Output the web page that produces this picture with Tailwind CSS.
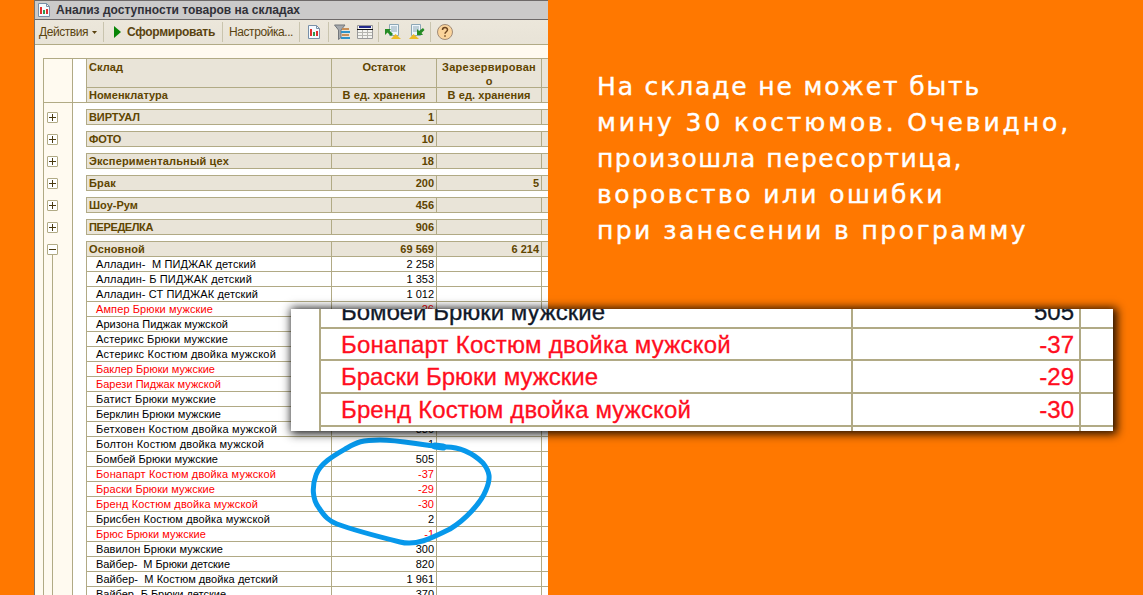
<!DOCTYPE html>
<html lang="ru">
<head>
    <meta charset="UTF-8">
    <meta name="viewport" content="width=device-width, initial-scale=1.0">
    <title>Анализ доступности товаров на складах</title>
    <script src="https://cdn.jsdelivr.net/npm/@tailwindcss/browser@4"></script>
</head>
<body class="relative w-[1143px] h-[595px] overflow-hidden bg-[#ff7800] font-['Liberation_Sans',sans-serif] text-[11px]">
    <div class="flex h-[595px] overflow-hidden">
        <!-- Окно отчёта -->
        <div class="flex flex-col shrink-0 ml-[34px] w-[514px] h-[595px] border-l border-[#77736e] bg-[#fffaf0] overflow-hidden">
            <div class="flex items-center shrink-0 h-5 border-t border-b border-[#6d6969] bg-[#cbcaca] pl-[3px]">
                <svg class="w-3 h-[14px] shrink-0" viewBox="0 0 12 14"><path d="M.5.5h8l3 3v10H.5z" fill="#f5faff" stroke="#7890a8"/><path d="M8.500 .5v3h3" fill="none" stroke="#7890a8"/><path d="M2 4h2v7H2zM8 6h2v5H8z" fill="#e03030"/><path d="M5 7h2v4H5z" fill="#2f9a50"/></svg>
                <span class="fit whitespace-pre ml-1.5 font-bold text-[12px] text-[#303038]" data-w="244">Анализ доступности товаров на складах</span>
            </div>
            <div class="flex items-center shrink-0 h-[25px] border-b border-[#b1aa85] bg-linear-to-b from-[#ece7db] to-[#e8e3d7] pl-1 text-[12px] text-[#5a4310] *:shrink-0">
                <span class="fit whitespace-pre" data-w="49">Действия</span>
                <svg class="ml-1 w-[5px] h-[3px]" viewBox="0 0 5 3"><path d="M0 0h5L2.500 3z" fill="#5a4310"/></svg>
                <i class="ml-[6px] w-px h-5 bg-[#c9c4ae]"></i>
                <svg class="ml-[10px] w-[7px] h-3" viewBox="0 0 7 12"><path d="M0 0l7 6-7 6z" fill="#078507"/></svg>
                <span class="fit whitespace-pre ml-[6px] font-bold" data-w="88">Сформировать</span>
                <i class="ml-[7px] w-px h-5 bg-[#c9c4ae]"></i>
                <span class="fit whitespace-pre ml-[6px]" data-w="64">Настройка...</span>
                <i class="ml-[6px] w-px h-5 bg-[#c9c4ae]"></i>
                <svg class="ml-2 w-3 h-[14px]" viewBox="0 0 12 14"><path d="M.5.500h8l3 3v10H.5z" fill="#f5faff" stroke="#7890a8"/><path d="M8.500 .5v3h3" fill="none" stroke="#7890a8"/><path d="M2 4h2v7H2zM8 6h2v5H8z" fill="#e03030"/><path d="M5 7h2v4H5z" fill="#2f9a50"/></svg>
                <i class="ml-2 w-px h-5 bg-[#c9c4ae]"></i>
                <svg class="ml-[5px] w-4 h-4" viewBox="0 0 16 16"><path d="M.5 1h10.500L7 6v7.500l-2.500 2V6z" fill="#a5a9ad" stroke="#73777b"/><path d="M8 4h7v2H8zM8 10h7v2H8z" fill="#c99058"/><path d="M7 7h9v2H7zM7 13h9v2H7z" fill="#2f93c8"/></svg>
                <svg class="ml-[7px] w-4 h-[14px]" viewBox="0 0 16 14"><path d="M.5.500h15v13H.5z" fill="#f4f4f0" stroke="#999"/><path d="M2 1h12v2H2z" fill="#252b8d"/><path d="M1 7.500h14M1 10.500h14M5.500 5v8M10.500 5v8" stroke="#b5b5b0"/><path d="M0 4.500h16" stroke="#111"/></svg>
                <i class="ml-[5px] w-px h-5 bg-[#c9c4ae]"></i>
                <svg class="ml-[6px] w-4 h-4" viewBox="0 0 16 16"><path d="M4.500.500h9v11h-9z" fill="#eef6fb" stroke="#8ca6b5"/><path d="M6 3h6M6 5h6M6 7h6" stroke="#8ca6b5"/><path d="M0 5h6L4.500 6.500 8 10l-2 2-3.500-3.500L0 11z" fill="#258b25"/><path d="M6 15l4.500-5L16 15z" fill="#edbb25"/></svg>
                <svg class="ml-2 w-4 h-4" viewBox="0 0 16 16"><path d="M2.500.500h9v11h-9z" fill="#eef6fb" stroke="#8ca6b5"/><path d="M4 3h6M4 5h6M4 7h6" stroke="#8ca6b5"/><path d="M14 11H8V5l2 2 4-3 1.500 2L12.500 9z" fill="#258b25"/><path d="M0 15l4.500-5L10 15z" fill="#edbb25"/></svg>
                <i class="ml-[5px] w-px h-5 bg-[#c9c4ae]"></i>
                <svg class="ml-[6px] w-4 h-4" viewBox="0 0 16 16"><circle cx="8" cy="8" r="7.500" fill="#fbd49b" stroke="#a08a76"/><path d="M5.500 6c0-3.200 5-3.200 5-.2 0 2-2.500 1.900-2.500 4M8 11.300v1.500" fill="none" stroke="#6d4520" stroke-width="1.500"/></svg>
            </div>

            <!-- Таблица -->
            <div class="flex shrink-0 mt-[13px] ml-2 border-t border-l border-[#b1aa85] h-[537px]">
                <div id="tree" class="w-[29px] shrink-0 border-r border-[#b1aa85]">
                    <div class="h-[44px] border-b border-[#b1aa85] mb-[9px]"></div>
                </div>
                <div class="w-[13px] shrink-0 bg-white"><div class="h-[44px] border-b border-[#b1aa85]"></div></div>
                <div id="report" class="w-[470px] shrink-0 bg-white">
                    <div class="grid grid-cols-[246px_105px_105px_14px] grid-rows-[29px_15px] bg-[#e9e4d8] font-bold text-[#5f4500] leading-[14px] text-center *:border-b *:border-r *:border-[#b1aa85]">
                        <div class="border-l pl-[2px] pt-px text-left"><span class="fit whitespace-pre" data-w="34">Склад</span></div>
                        <div class="pt-px"><span class="fit whitespace-pre" data-w="43">Остаток</span></div>
                        <div class="pt-px"><span class="fit whitespace-pre" data-w="94">Зарезервирован</span><br>о</div>
                        <div></div>
                        <div class="border-l pl-[2px] text-left"><span class="fit whitespace-pre" data-w="79">Номенклатура</span></div>
                        <div><span class="fit whitespace-pre" data-w="83">В ед. хранения</span></div>
                        <div><span class="fit whitespace-pre" data-w="83">В ед. хранения</span></div>
                        <div></div>
                    </div>
                </div>
            </div>
        </div>

        <!-- Комментарий -->
        <div class="ml-[49px] mt-[69px] flex flex-col items-start text-white text-[25px] leading-9 font-['DejaVu_Sans',sans-serif] [-webkit-text-stroke:0.4px_white]">
            <span class="fit whitespace-pre" data-w="384">На складе не может быть</span>
            <span class="fit whitespace-pre" data-w="474">мину 30 костюмов. Очевидно,</span>
            <span class="fit whitespace-pre" data-w="366">произошла пересортица,</span>
            <span class="fit whitespace-pre" data-w="348">воровство или ошибки</span>
            <span class="fit whitespace-pre" data-w="431">при занесении в программу</span>
        </div>
    </div>

    <!-- Обводка маркером -->
    <svg class="absolute left-0 top-0 w-[1143px] h-[595px]" viewBox="0 0 1143 595" fill="none" stroke="#0798eb" stroke-linecap="round" stroke-linejoin="round">
        <path stroke-width="5" d="M444 447C420 445 400 440 380 440C362 440 357 442 347 448C335 455 320 463 316 475C312 486 312 499 319 508C325 517 329 521 337 524C356 531 380 537 400 542C416 546 430 539 450 529C465 520 481 503 486 490C491 478 490 472 483 463C473 453 458 446 444 447"/>
        <path stroke-width="7" d="M435 446l8 1"/>
    </svg>

    <!-- Увеличенный фрагмент -->
    <div class="absolute left-[291px] top-[309px] w-[822px] h-[122px] overflow-hidden bg-white shadow-[2px_1px_9px_2px_rgba(0,0,0,0.9)] text-[24px] text-[#ff0d20] [-webkit-text-stroke:0.3px]">
        <div id="zoomed" class="ml-7 -mt-[13px] border-l-2 border-[#b1aa85]"></div>
    </div>

    <script>
        const groups = [
            ["ВИРТУАЛ", "1", "", 51], ["ФОТО", "10", "", 32], ["Экспериментальный цех", "18", "", 140],
            ["Брак", "200", "5", 27], ["Шоу-Рум", "456", "", 49], ["ПЕРЕДЕЛКА", "906", "", 64],
            ["Основной", "69 569", "6 214", 56],
        ];
        // название, остаток, ширина текста
        const items = [
            ["Алладин-  М ПИДЖАК детский", "2 258", 160], ["Алладин- Б ПИДЖАК детский", "1 353", 156],
            ["Алладин- СТ ПИДЖАК детский", "1 012", 162], ["Ампер Брюки мужские", "-26", 117],
            ["Аризона Пиджак мужской", "", 132], ["Астерикс Брюки мужские", "", 132],
            ["Астерикс Костюм двойка мужской", "", 180], ["Баклер Брюки мужские", "", 119],
            ["Барези Пиджак мужской", "", 125], ["Батист Брюки мужские", "", 120],
            ["Берклин Брюки мужские", "", 125], ["Бетховен Костюм двойка мужской", "330", 181],
            ["Болтон Костюм двойка мужской", "1", 168], ["Бомбей Брюки мужские", "505", 122],
            ["Бонапарт Костюм двойка мужской", "-37", 180], ["Браски Брюки мужские", "-29", 119],
            ["Бренд Костюм двойка мужской", "-30", 162], ["Брисбен Костюм двойка мужской", "2", 174],
            ["Брюс Брюки мужские", "-1", 110], ["Вавилон Брюки мужские", "300", 127],
            ["Вайбер-  М Брюки детские", "820", 134], ["Вайбер-  М Костюм двойка детский", "1 961", 182],
            ["Вайбер- Б Брюки детские", "370", 130],
        ];
        const red = ["Ампер", "Баклер", "Барези", "Бонапарт", "Браски", "Бренд", "Брюс"];
        const report = document.getElementById("report");
        const tree = document.getElementById("tree");

        groups.forEach(([name, rest, reserved, w], i) => {
            const open = i === groups.length - 1;
            report.innerHTML += `<div class="mt-[6px] grid grid-cols-[246px_105px_105px_14px] h-4 border-y border-[#b1aa85] bg-[#e9e4d8] font-bold text-[#5f4500] leading-[14px] text-right *:border-r *:border-[#b1aa85]">
                <div class="border-l pl-[2px] text-left"><span class="fit whitespace-pre" data-w="${w}">${name}</span></div>
                <div class="pr-[2px]">${rest}</div><div class="pr-[2px]">${reserved}</div><div></div></div>`;
            tree.innerHTML += `<div class="ml-[3px] mb-[11px] w-[11px] h-[11px] border border-[#b1aa85] rounded-[1px] bg-white">
                <svg class="block w-[9px] h-[9px]" viewBox="0 0 9 9"><path d="${open ? "M1 4.5h7" : "M1 4.5h7M4.5 1v7"}" stroke="#4a3a10"/></svg></div>`;
        });
        tree.innerHTML += `<div class="-mt-[11px] ml-2 w-px h-[342px] bg-[#b1aa85]"></div>`;

        items.forEach(([name, rest, w]) => {
            const color = red.includes(name.split(" ")[0]) ? "text-[#ff0000]" : "text-black";
            report.innerHTML += `<div class="grid grid-cols-[246px_105px_105px_14px] h-[15px] border-b border-[#b1aa85] leading-[14px] text-right *:border-r *:border-[#b1aa85] ${color}">
                <div class="border-l pl-[9px] text-left"><span class="fit whitespace-pre" data-w="${w}">${name}</span></div>
                <div class="pr-[2px]">${rest}</div><div></div><div></div></div>`;
        });

        const zoomed = [
            ["Бомбей Брюки мужские", "505", 264], ["Бонапарт Костюм двойка мужской", "-37", 390],
            ["Браски Брюки мужские", "-29", 257], ["Бренд Костюм двойка мужской", "-30", 350], ["", "", 0],
        ];
        zoomed.forEach(([name, rest, w], i) => {
            document.getElementById("zoomed").innerHTML += `<div class="grid grid-cols-[532px_228px_36px] h-[32.7px] border-b-2 border-[#b1aa85] leading-[31px] *:border-r-2 *:border-[#b1aa85] ${i ? "" : "text-[#101828]"}">
                <div class="pl-5"><span class="fit whitespace-pre" data-w="${w}">${name}</span></div>
                <div class="pr-[5px] text-right">${rest}</div><div></div></div>`;
        });

        // подгоняем межбуквенный интервал под ширину надписи
        function fitTexts() {
            document.querySelectorAll(".fit").forEach(el => {
                const n = el.textContent.length;
                if (!n) return;
                el.style.letterSpacing = "0px";
                el.style.letterSpacing = (el.dataset.w - el.getBoundingClientRect().width) / n + "px";
            });
        }

        window.onload = () => {
            fitTexts();
            document.fonts.ready.then(fitTexts);
            setTimeout(fitTexts, 50);
        };
    </script>
</body>
</html>
